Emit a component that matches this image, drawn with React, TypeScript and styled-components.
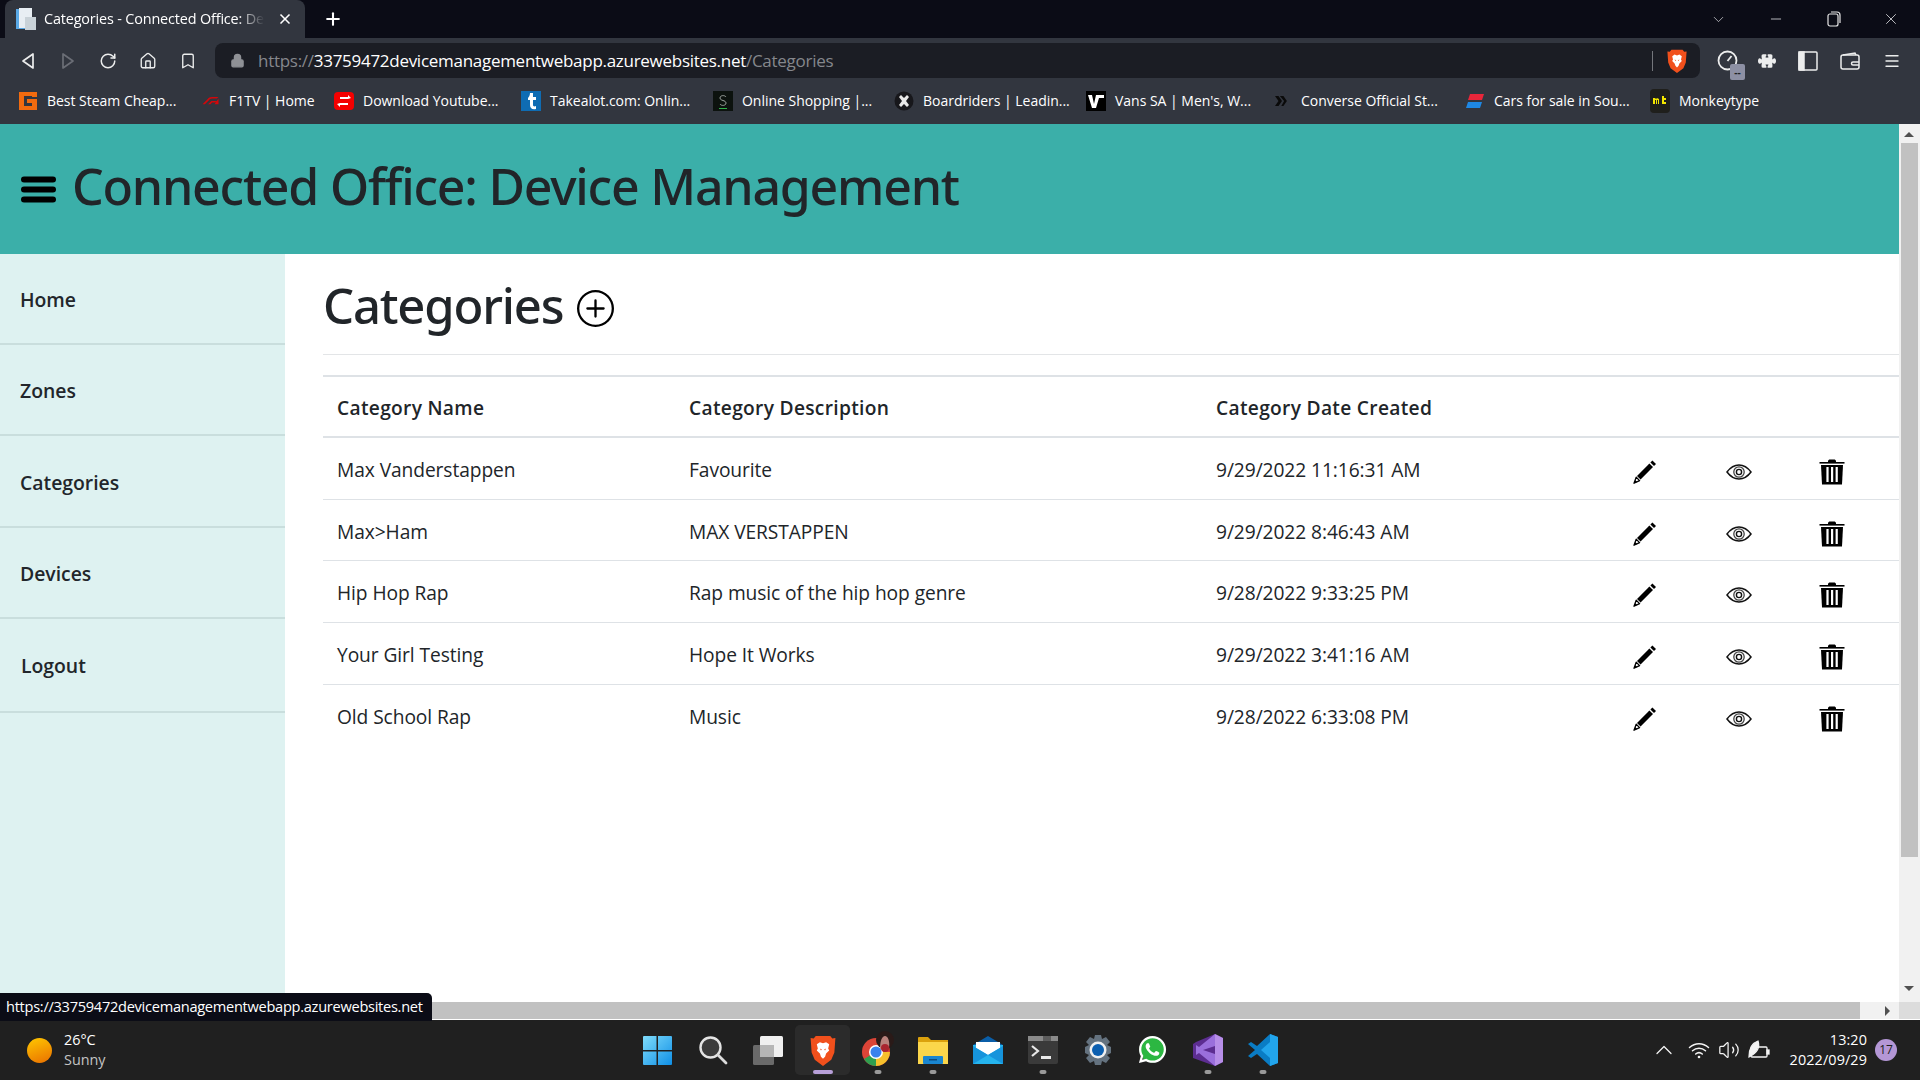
import React from "react";
import styled, { createGlobalStyle } from "styled-components";
import {
  RotateCw,
  Home as HomeIcon,
  Bookmark,
  Lock,
  Minus,
  X,
  Plus,
  ChevronDown,
  ChevronUp,
  Volume2,
  Menu,
} from "lucide-react";
import { BsPlusCircle, BsPuzzleFill } from "react-icons/bs";
import { FaWhatsapp } from "react-icons/fa";

const GlobalStyle = createGlobalStyle`
  html, body {
    margin: 0;
    padding: 0;
    width: 1920px;
    height: 1080px;
    overflow: hidden;
    background: #fff;
    font-family: "Open Sans", "Noto Sans", sans-serif;
    color: #212529;
  }
  * { box-sizing: border-box; }
`;

const Screen = styled.div`
  position: relative;
  width: 1920px;
  height: 1080px;
  display: flex;
  flex-direction: column;
  overflow: hidden;
`;

/* browser chrome */
const TabStrip = styled.div`
  height: 38px;
  background: #0b0c16;
  display: flex;
  align-items: flex-end;
  padding-left: 5px;
  color: #fff;
`;

const Tab = styled.div`
  width: 300px;
  height: 38px;
  background: #32363f;
  border-radius: 8px 8px 0 0;
  display: flex;
  align-items: center;
  padding-left: 11px;
  gap: 8px;
`;

const TabTitle = styled.div`
  width: 225px;
  padding-right: 4px;
  font-size: 14.4px;
  letter-spacing: -0.15px;
  line-height: 20px;
  margin-top: -1px;
  white-space: nowrap;
  overflow: hidden;
  mask-image: linear-gradient(to right, #000 86%, transparent 98%);
`;

const NewTab = styled.div`
  width: 56px;
  display: flex;
  justify-content: center;
  align-self: center;
`;

const WindowControls = styled.div`
  margin-left: auto;
  display: flex;
  align-self: center;
`;

const WindowButton = styled.div`
  width: 57.5px;
  display: flex;
  justify-content: center;
  align-items: center;
  color: #dfe0e3;
`;

const Toolbar = styled.div`
  height: 40px;
  background: #32363f;
  display: flex;
  align-items: flex-end;
  padding-left: 8px;
  color: #e8e9eb;
`;

const NavButton = styled.div<{ $dim?: boolean }>`
  width: 40px;
  height: 35px;
  display: flex;
  align-items: center;
  justify-content: center;
  color: ${(p) => (p.$dim ? "#6b6e76" : "#eceded")};
`;

const UrlBar = styled.div`
  width: 1485px;
  height: 35px;
  margin-left: 7px;
  background: #1b1d24;
  border-radius: 8px;
  display: flex;
  align-items: center;
  padding-left: 15px;
`;

const UrlText = styled.div`
  margin-left: 13px;
  width: 1394px;
  font-size: 17px;
  letter-spacing: -0.28px;
  white-space: nowrap;
  color: #85878c;
  span { color: #fff; }
`;

const UrlDivider = styled.div`
  width: 1px;
  height: 20px;
  background: #74767c;
`;

const BraveSlot = styled.div`
  margin-left: 14px;
  display: flex;
`;

const ToolIcons = styled.div`
  display: flex;
  height: 35px;
  align-items: center;
  margin-left: 7px;
`;

const ToolIcon = styled.div<{ $width: number }>`
  position: relative;
  width: ${(p) => p.$width}px;
  display: flex;
  justify-content: center;
  align-items: center;
  color: #eceded;
`;

const CountBadge = styled.div`
  position: absolute;
  right: 2px;
  bottom: -9px;
  width: 15px;
  height: 16px;
  border-radius: 2px;
  background: #8d90a4;
  color: #202227;
  font-size: 10px;
  font-weight: 700;
  line-height: 16px;
  text-align: center;
`;

const BookmarksBar = styled.div`
  height: 46px;
  background: #32363f;
  display: flex;
  align-items: center;
  padding-left: 18px;
  color: #fff;
`;

const BookmarkItem = styled.div<{ $width: number }>`
  width: ${(p) => p.$width}px;
  display: flex;
  align-items: center;
  gap: 9px;
  font-size: 14px;
  line-height: 20px;
  letter-spacing: -0.02px;
  white-space: nowrap;
  margin-top: -1px;
`;

const FavSlot = styled.div`
  width: 20px;
  height: 20px;
  display: flex;
  align-items: center;
  justify-content: center;
  flex: none;
`;

/* page */
const Viewport = styled.div`
  height: 878px;
  display: flex;
`;

const Page = styled.div`
  width: 1899px;
  display: flex;
  flex-direction: column;
`;

const Banner = styled.header`
  height: 130px;
  background: #3bafa9;
  display: flex;
  align-items: center;
  padding-left: 21px;
  gap: 16px;
`;

const BannerTitle = styled.h1`
  margin: 0 0 7px;
  font-family: "Noto Sans", "Open Sans", sans-serif;
  font-size: 50px;
  font-weight: 500;
  letter-spacing: -1.22px;
  line-height: 60px;
  color: #212529;
`;

const Columns = styled.div`
  flex: 1;
  display: flex;
`;

const Sidebar = styled.nav`
  flex: none;
  width: 285px;
  background: #def2f1;
  display: flex;
  flex-direction: column;
`;

const SideLink = styled.a<{ $height: number; $inset?: number }>`
  height: ${(p) => p.$height}px;
  display: flex;
  align-items: center;
  padding-left: ${(p) => p.$inset ?? 20}px;
  padding-top: ${(p) => (p.$inset ? 0 : 2)}px;
  border-bottom: 2px solid #c9dedd;
  font-size: 19.4px;
  font-weight: 600;
  letter-spacing: -0.02px;
  color: #22262b;
`;

const Content = styled.main`
  flex: 1;
  min-width: 0;
  padding-left: 38px;
`;

const HeadingRow = styled.div`
  height: 101px;
  border-bottom: 1px solid #e3e5e7;
  display: flex;
  align-items: center;
  gap: 14px;
  margin-bottom: 20px;
  padding-top: 2px;
`;

const Heading = styled.h1`
  margin: 0;
  font-family: "Noto Sans", "Open Sans", sans-serif;
  font-size: 49px;
  font-weight: 500;
  letter-spacing: -1.2px;
  line-height: 60px;
  color: #212529;
`;

const AddLink = styled.a`
  display: flex;
  color: #000;
  margin-top: 6px;
`;

const Table = styled.table`
  width: 100%;
  table-layout: fixed;
  border-collapse: separate;
  border-spacing: 0;
  font-size: 19.2px;
  letter-spacing: -0.08px;
  color: #212529;
`;

const Column = styled.col<{ $width: number }>`
  width: ${(p) => p.$width}px;
`;

const HeadCell = styled.th`
  height: 63px;
  padding: 1px 14px 0;
  text-align: left;
  font-weight: 600;
  letter-spacing: 0.3px;
  border-top: 2px solid #dee2e6;
  border-bottom: 2px solid #dee2e6;
`;

const Cell = styled.td<{ $last?: boolean }>`
  height: 61.7px;
  padding: 2px 14px 0;
  border-bottom: ${(p) => (p.$last ? "none" : "1.5px solid #dee2e6")};
`;

const ActionCell = styled(Cell)<{ $end?: boolean }>`
  padding: 7px ${(p) => (p.$end ? "21px" : "0")} 0 0;
  text-align: center;
  line-height: 0;
`;

const VScroll = styled.div`
  position: relative;
  width: 21px;
  background: #f1f1f1;
`;

const VThumb = styled.div`
  position: absolute;
  top: 19px;
  left: 2px;
  width: 17px;
  height: 714px;
  background: #c1c1c1;
`;

const ArrowUp = styled.div<{ $down?: boolean }>`
  position: absolute;
  left: 5px;
  ${(p) => (p.$down ? "bottom: 11px;" : "top: 8px;")}
  width: 0;
  height: 0;
  border-left: 5px solid transparent;
  border-right: 5px solid transparent;
  ${(p) => (p.$down ? "border-top: 5px solid #505050;" : "border-bottom: 5px solid #505050;")}
`;

const HScroll = styled.div`
  height: 18px;
  display: flex;
  background: #f1f1f1;
  border-bottom: 1px solid #fff;
`;

const HThumb = styled.div`
  width: 1860px;
  background: #c1c1c1;
`;

const HArrowSlot = styled.div`
  width: 39px;
  display: flex;
  align-items: center;
  justify-content: flex-end;
  padding-right: 9px;
`;

const HArrow = styled.div`
  width: 0;
  height: 0;
  border-top: 5px solid transparent;
  border-bottom: 5px solid transparent;
  border-left: 5px solid #505050;
`;

const Corner = styled.div`
  width: 21px;
  background: #dcdcdc;
`;

const StatusBubble = styled.div`
  position: absolute;
  left: 0;
  top: 993px;
  width: 432px;
  height: 28px;
  background: #0b0c16;
  border-radius: 0 5px 0 0;
  color: #fff;
  font-size: 14.6px;
  letter-spacing: -0.28px;
  line-height: 27px;
  padding-left: 6px;
  white-space: nowrap;
`;

/* taskbar */
const Taskbar = styled.footer`
  height: 60px;
  background: #202020;
  display: grid;
  grid-template-columns: 1fr auto 1fr;
  align-items: center;
  color: #fff;
`;

const Weather = styled.div`
  display: flex;
  align-items: center;
  padding-left: 27px;
  gap: 12px;
`;

const Sun = styled.div`
  width: 25px;
  height: 25px;
  border-radius: 50%;
  background: linear-gradient(160deg, #ffc800, #e96f00);
`;

const WeatherText = styled.div`
  font-size: 14.4px;
  line-height: 20px;
  span { display: block; color: #c4c4c4; }
`;

const TaskIcons = styled.div`
  display: flex;
`;

const TaskIcon = styled.div<{ $active?: boolean }>`
  position: relative;
  width: 55px;
  height: 50px;
  display: flex;
  align-items: center;
  justify-content: center;
  border-radius: 5px;
  background: ${(p) => (p.$active ? "#2b2b2b" : "transparent")};
`;

const RunningDot = styled.div<{ $active?: boolean }>`
  position: absolute;
  bottom: 1px;
  left: 50%;
  transform: translateX(-50%);
  height: 4px;
  border-radius: 2px;
  width: ${(p) => (p.$active ? 20 : 7)}px;
  background: ${(p) => (p.$active ? "#b79fd8" : "#9a9a9a")};
`;

const Tray = styled.div`
  display: flex;
  justify-content: flex-end;
  align-items: center;
  padding-right: 23px;
`;

const TrayIcon = styled.div<{ $width?: number }>`
  width: ${(p) => p.$width ?? 30}px;
  display: flex;
  justify-content: center;
  color: #f3f3f3;
`;

const Clock = styled.div`
  margin-left: 16px;
  text-align: right;
  font-size: 14.4px;
  line-height: 20px;
  letter-spacing: 0.1px;
`;

const NotifyBadge = styled.div`
  margin-left: 8px;
  width: 22px;
  height: 22px;
  border-radius: 50%;
  background: #b497d6;
  color: #202020;
  font-size: 12px;
  line-height: 22px;
  text-align: center;
`;

/* drawings */
const BraveLion = ({ width, height }: { width: number; height: number }) => (
  <svg width={width} height={height} viewBox="0 0 24 30">
    <path d="M5 1h14l2 2.500L24 3l-1 14-3 7-8 6-8-6-3-7L0 3l3 .5z" fill="#f1501c" />
    <path d="M6 9l3-2 3 1 3-1 3 2-1 4 1 2-3 3-1 3-2 2-2-2-1-3-3-3 1-2z" fill="#fff" />
    <path d="M9 13l2 1-1 1zM15 13l-2 1 1 1z" fill="#f1501c" />
  </svg>
);

const PencilIcon = () => (
  <svg width="24" height="24" viewBox="0 0 24 24">
    <path d="M19.400 0.600l3.600 3.400-2 2.100-3.600-3.500z" fill="#000" />
    <path d="M16.400 3.600l3.600 3.500L7.600 19.600 4 16z" fill="#000" />
    <path d="M3.200 17.200l3.400 3.400-5.600 2.600z" fill="none" stroke="#000" strokeWidth="1.300" strokeLinejoin="round" />
    <path d="M1 23.200l1.200-3.200 2 2z" fill="#000" />
  </svg>
);

const EyeIcon = () => (
  <svg width="26" height="16" viewBox="0 0 26 16" fill="none" stroke="#111">
    <path d="M1 8c3-4 7-7 12-7s9 3 12 7c-3 4-7 7-12 7S4 12 1 8z" strokeWidth="1.500" />
    <circle cx="13" cy="8" r="5.200" strokeWidth="1.300" stroke="#444" />
    <circle cx="13" cy="8" r="2.600" strokeWidth="1.400" />
  </svg>
);

const TrashIcon = () => (
  <svg width="26" height="26" viewBox="0 0 26 26">
    <path d="M9 2.200C9 .9 10 .4 11 .4h4c1 0 2 .5 2 1.800V3H9z" fill="#000" />
    <rect x="0.500" y="3" width="25" height="1.600" fill="#000" />
    <path d="M2 6h22l-1 19.400H3z" fill="#000" />
    <rect x="7.400" y="8" width="2.200" height="15" fill="#fff" />
    <rect x="12" y="8" width="2.200" height="15" fill="#fff" />
    <rect x="16.600" y="8" width="2.200" height="15" fill="#fff" />
  </svg>
);

const Hamburger = () => (
  <svg width="35" height="27" viewBox="0 0 35 27">
    <rect y="0.500" width="35" height="6" rx="3" fill="#000" />
    <rect y="10.500" width="35" height="6" rx="3" fill="#000" />
    <rect y="20.500" width="35" height="6" rx="3" fill="#000" />
  </svg>
);

const TabFavicon = () => (
  <svg width="20" height="22" viewBox="0 0 20 22">
    <rect x="0" y="1" width="13" height="20" fill="#5aa9e6" />
    <rect x="3" y="0" width="13" height="20" fill="#e8eef3" />
    <rect x="9" y="9" width="11" height="13" fill="#c9d2d8" />
  </svg>
);

const WifiIcon = () => (
  <svg width="22" height="18" viewBox="0 0 22 18" fill="none" stroke="#f3f3f3" strokeWidth="1.500" strokeLinecap="round">
    <path d="M1.500 6.500c5.500-5 13.500-5 19 0" />
    <path d="M4.500 9.800c3.800-3.400 9.200-3.400 13 0" />
    <path d="M7.700 13c1.900-1.600 4.700-1.600 6.600 0" />
    <circle cx="11" cy="16" r="1.300" fill="#f3f3f3" stroke="none" />
  </svg>
);

const bookmarkIcons: Record<string, React.ReactNode> = {
  g: (
    <svg width="20" height="20" viewBox="0 0 20 20">
      <path d="M1 1h18v5h-5V5H6v10h8v-3H9V8h10v11H1z" fill="#f26b0f" />
    </svg>
  ),
  f1: (
    <svg width="19" height="8" viewBox="0 0 20 10">
      <path d="M0 9l6-6c2-2 3-3 6-3h8l-2 2h-6c-2 0-3 1-4 2l-5 5zM7 9l4-4h7l-2 2h-4l-2 2zM15 9l5-7v7z" fill="#d4070a" />
    </svg>
  ),
  yt: (
    <svg width="20" height="18" viewBox="0 0 20 18">
      <rect width="20" height="18" rx="4" fill="#f40000" />
      <path d="M6 5h8V3l3 3-3 1H6zM14 13H6v2l-3-3 3-1h8z" fill="#fff" />
    </svg>
  ),
  t: (
    <svg width="20" height="20" viewBox="0 0 20 20">
      <rect width="20" height="20" fill="#0f6cb3" />
      <path d="M9 2h3v4h3v3h-3v5c0 1 1 2 3 1v3c-4 1-6-1-6-4V9H7V7c1-1 2-3 2-5z" fill="#fff" />
    </svg>
  ),
  s: (
    <svg width="20" height="20" viewBox="0 0 20 20">
      <rect width="20" height="20" fill="#0c120e" />
      <path d="M13 6c-1-2-6-2-6 1s6 2 6 5-5 3-6 1" fill="none" stroke="#9ca29e" strokeWidth="1" />
      <rect x="6" y="17" width="8" height="1" fill="#2fb24a" />
    </svg>
  ),
  br: (
    <svg width="20" height="20" viewBox="0 0 20 20">
      <circle cx="10" cy="10" r="9.500" fill="#17171b" />
      <path d="M7 4l3 3 3-3 2 2-3 4 3 4-2 2-3-3-3 3-2-2 3-4-3-4z" fill="#e8e8e8" />
    </svg>
  ),
  v: (
    <svg width="20" height="20" viewBox="0 0 20 20">
      <rect width="20" height="20" fill="#000" />
      <path d="M2 4h4l2 9 2-9h8v3h-5l-3 10H6z" fill="#fff" />
    </svg>
  ),
  c: (
    <svg width="14" height="12" viewBox="0 0 20 14">
      <path d="M0 0h5l5 7-5 7H0l5-7zM7 0h5l5 7-5 7H9l4-7z" fill="#0a0a0a" />
    </svg>
  ),
  cars: (
    <svg width="18" height="14" viewBox="0 0 18 14">
      <path d="M4 0h14l-2 6H2z" fill="#e8263a" />
      <path d="M2 8h14l-2 6H0z" fill="#1e88e5" />
    </svg>
  ),
  mt: (
    <svg width="20" height="24" viewBox="0 0 20 24">
      <rect width="20" height="24" rx="4" fill="#1f1f1c" />
      <path d="M3 15V9h2l1 1 1-1 2 1v5H8v-4H7v4H6v-4H5v4zM12 7h2v2h2v2h-2v2h2v2h-4z" fill="#f3e600" />
    </svg>
  ),
};

const bookmarks = [
  { icon: "g", label: "Best Steam Cheap...", width: 182 },
  { icon: "f1", label: "F1TV | Home", width: 134 },
  { icon: "yt", label: "Download Youtube...", width: 187 },
  { icon: "t", label: "Takealot.com: Onlin...", width: 192 },
  { icon: "s", label: "Online Shopping |...", width: 181 },
  { icon: "br", label: "Boardriders | Leadin...", width: 192 },
  { icon: "v", label: "Vans SA | Men's, W...", width: 186 },
  { icon: "c", label: "Converse Official St...", width: 193 },
  { icon: "cars", label: "Cars for sale in Sou...", width: 185 },
  { icon: "mt", label: "Monkeytype", width: 110 },
];

const sideLinks = [
  { label: "Home", height: 91 },
  { label: "Zones", height: 91 },
  { label: "Categories", height: 92 },
  { label: "Devices", height: 91 },
  { label: "Logout", height: 94, inset: 21 },
];

const categories = [
  { name: "Max Vanderstappen", description: "Favourite", created: "9/29/2022 11:16:31 AM" },
  { name: "Max>Ham", description: "MAX VERSTAPPEN", created: "9/29/2022 8:46:43 AM" },
  { name: "Hip Hop Rap", description: "Rap music of the hip hop genre", created: "9/28/2022 9:33:25 PM" },
  { name: "Your Girl Testing", description: "Hope It Works", created: "9/29/2022 3:41:16 AM" },
  { name: "Old School Rap", description: "Music", created: "9/28/2022 6:33:08 PM" },
];

const taskIcons: { key: string; dot?: boolean; active?: boolean; node: React.ReactNode }[] = [
  {
    key: "start",
    node: (
      <svg width="29" height="29" viewBox="0 0 29 29">
        <defs>
          <linearGradient id="win" x1="0" y1="0" x2="1" y2="1">
            <stop offset="0" stopColor="#7fdcfb" />
            <stop offset="1" stopColor="#0f8fe6" />
          </linearGradient>
        </defs>
        <path d="M0 1a1 1 0 0 1 1-1h12.500v14H0zM15 0h13a1 1 0 0 1 1 1v13H15zM0 15.500h13.500V29H1a1 1 0 0 1-1-1zM15 15.500h14V28a1 1 0 0 1-1 1H15z" fill="url(#win)" />
      </svg>
    ),
  },
  {
    key: "search",
    node: (
      <svg width="30" height="30" viewBox="0 0 30 30" fill="none">
        <circle cx="12.500" cy="12.500" r="10" fill="#3c3c3c" stroke="#e4e4e4" strokeWidth="2.400" />
        <path d="M20 20l8 8" stroke="#dcdcdc" strokeWidth="2.800" strokeLinecap="round" />
      </svg>
    ),
  },
  {
    key: "tasks",
    node: (
      <svg width="30" height="29" viewBox="0 0 30 29">
        <rect x="0" y="9" width="21" height="20" rx="1.500" fill="#6a6a6a" />
        <rect x="7" y="0" width="23" height="21" rx="1.500" fill="#f0f0f0" />
        <rect x="7" y="9" width="14" height="12" fill="#b6b6b6" />
      </svg>
    ),
  },
  { key: "brave", active: true, dot: true, node: <BraveLion width={26} height={31} /> },
  {
    key: "chrome",
    dot: true,
    node: (
      <svg width="34" height="38" viewBox="0 0 34 38">
        <circle cx="15" cy="21" r="14" fill="#dc4437" />
        <path d="M15 21L3 28a14 14 0 0 0 12 7z" fill="#2f9e4f" />
        <path d="M15 21v14a14 14 0 0 0 12-7 14 14 0 0 0 2-7z" fill="#f6c02c" />
        <circle cx="15" cy="21" r="7" fill="#fff" />
        <circle cx="15" cy="21" r="5.500" fill="#3b82ee" />
        <circle cx="24" cy="9" r="9" fill="#2a1a18" />
        <path d="M19 18c0-8 2-13 5-13s5 5 4 12l-4 3z" fill="#b9827c" />
        <circle cx="24" cy="17" r="4" fill="#a9252f" />
      </svg>
    ),
  },
  {
    key: "files",
    dot: true,
    node: (
      <svg width="30" height="28" viewBox="0 0 30 28">
        <path d="M0 2a1 1 0 0 1 1-1h9l3 3h17v5H0z" fill="#dba10d" />
        <path d="M0 6h30v22H0z" fill="#fbd64b" />
        <rect x="5" y="20" width="20" height="8" rx="1" fill="#1a86d0" />
        <rect x="11" y="23" width="8" height="1.500" fill="#0c4d80" />
      </svg>
    ),
  },
  {
    key: "mail",
    node: (
      <svg width="30" height="28" viewBox="0 0 30 28">
        <path d="M15 0l15 9v2H0V9z" fill="#0a5ea8" />
        <path d="M0 9h30v19H0z" fill="#25b4ee" />
        <path d="M3 6h24v6l-12 7-12-7z" fill="#fff" />
        <path d="M0 28V10l15 9-15 9zM30 28V10l-15 9 15 9z" fill="#1694dc" />
      </svg>
    ),
  },
  {
    key: "terminal",
    dot: true,
    node: (
      <svg width="30" height="28" viewBox="0 0 30 28">
        <rect width="30" height="28" rx="2" fill="#3a3a3a" />
        <rect width="30" height="5" fill="#8a8a8a" />
        <rect x="15" width="8" height="5" fill="#5d5d5d" />
        <path d="M4 10l6 5-6 5" fill="none" stroke="#e9e9e9" strokeWidth="2.200" />
        <rect x="13" y="20" width="10" height="3" fill="#e9e9e9" />
      </svg>
    ),
  },
  {
    key: "settings",
    node: (
      <svg width="30" height="30" viewBox="0 0 30 30">
        <path d="M12 0h6l1 4 4-2 4 5-3 3 4 2v6l-4 2 3 3-4 5-4-2-1 4h-6l-1-4-4 2-4-5 3-3-4-2v-6l4-2-3-3 4-5 4 2z" fill="#64727f" />
        <circle cx="15" cy="15" r="8.500" fill="#f0f0f0" />
        <circle cx="15" cy="15" r="6" fill="#0c5fb0" />
      </svg>
    ),
  },
  {
    key: "whatsapp",
    node: (
      <svg width="31" height="32" viewBox="0 0 31 32">
        <circle cx="15.500" cy="15.500" r="13" fill="#2cb742" />
        <foreignObject width="31" height="32">
          <FaWhatsapp size={31} color="#fff" />
        </foreignObject>
      </svg>
    ),
  },
  {
    key: "vs",
    dot: true,
    node: (
      <svg width="30" height="32" viewBox="0 0 30 32">
        <path d="M22 0l8 4v24l-8 4L0 24V10l3-2z" fill="#5c2d91" />
        <path d="M22 0l8 4v24l-8 4z" fill="#b78ee8" />
        <path d="M22 0v12L10 16l12 4v12L6 19l-3 2V11l3 2z" fill="#9a6fdc" />
      </svg>
    ),
  },
  {
    key: "vscode",
    dot: true,
    node: (
      <svg width="30" height="32" viewBox="0 0 30 32">
        <path d="M22 0l8 3v26l-8 3L9 20l-6 4-3-2 7-6-7-6 3-2 6 4z" fill="#0a7cc4" />
        <path d="M22 0l8 3v26l-8 3zM22 8l-9 8 9 8z" fill="#22a5ec" />
      </svg>
    ),
  },
];

const App = () => (
  <Screen>
    <GlobalStyle />
    <TabStrip>
      <Tab>
        <TabFavicon />
        <TabTitle>Categories - Connected Office: Device Management</TabTitle>
        <X size={16} strokeWidth={2.5} />
      </Tab>
      <NewTab>
        <Plus size={20} strokeWidth={2.5} />
      </NewTab>
      <WindowControls>
        <WindowButton>
          <ChevronDown size={17} strokeWidth={1} />
        </WindowButton>
        <WindowButton>
          <Minus size={16} strokeWidth={1.2} />
        </WindowButton>
        <WindowButton>
          <svg width="14" height="16" viewBox="0 0 14 16" fill="none" stroke="#e6e6e6" strokeWidth="1.200">
            <rect x="1" y="3" width="10" height="12" rx="2" />
            <path d="M4 1h6a3 3 0 0 1 3 3v8" />
          </svg>
        </WindowButton>
        <WindowButton>
          <X size={18} strokeWidth={1.1} />
        </WindowButton>
      </WindowControls>
    </TabStrip>

    <Toolbar>
      <NavButton>
        <svg width="14" height="18" viewBox="0 0 14 18" fill="none" stroke="currentColor" strokeWidth="1.700" strokeLinejoin="round">
          <path d="M12 2v14L2 9z" />
        </svg>
      </NavButton>
      <NavButton $dim>
        <svg width="14" height="18" viewBox="0 0 14 18" fill="none" stroke="currentColor" strokeWidth="1.700" strokeLinejoin="round">
          <path d="M2 2v14l10-7z" />
        </svg>
      </NavButton>
      <NavButton>
        <RotateCw size={18} strokeWidth={2} />
      </NavButton>
      <NavButton>
        <HomeIcon size={18} strokeWidth={1.8} />
      </NavButton>
      <NavButton>
        <Bookmark size={18} strokeWidth={1.8} />
      </NavButton>
      <UrlBar>
        <Lock size={15} color="#8f9196" fill="#8f9196" />
        <UrlText>
          https://<span>33759472devicemanagementwebapp.azurewebsites.net</span>/Categories
        </UrlText>
        <UrlDivider />
        <BraveSlot>
          <BraveLion width={20} height={24} />
        </BraveSlot>
      </UrlBar>
      <ToolIcons>
        <ToolIcon $width={40}>
          <svg width="21" height="21" viewBox="0 0 21 21" fill="none" stroke="#eceded" strokeWidth="1.800">
            <circle cx="10.500" cy="10.500" r="9" />
            <path d="M10.500 11l4-5" />
          </svg>
          <CountBadge>--</CountBadge>
        </ToolIcon>
        <ToolIcon $width={40}>
          <BsPuzzleFill size={18} />
        </ToolIcon>
        <ToolIcon $width={41}>
          <svg width="20" height="20" viewBox="0 0 20 20" fill="none" stroke="#eceded" strokeWidth="1.500">
            <rect x="1" y="1" width="18" height="18" rx="1" />
            <rect x="1" y="1" width="5" height="18" fill="#eceded" />
          </svg>
        </ToolIcon>
        <ToolIcon $width={43}>
          <svg width="20" height="18" viewBox="0 0 20 18" fill="none" stroke="#eceded" strokeWidth="1.500">
            <rect x="1" y="3" width="18" height="14" rx="2" />
            <path d="M3 3l12-2 1 2M13 10h6M13 10a1.500 1.500 0 0 0 0 3h6" />
          </svg>
        </ToolIcon>
        <ToolIcon $width={42}>
          <Menu size={18} strokeWidth={1.8} />
        </ToolIcon>
      </ToolIcons>
    </Toolbar>

    <BookmarksBar>
      {bookmarks.map((b) => (
        <BookmarkItem key={b.label} $width={b.width}>
          <FavSlot>{bookmarkIcons[b.icon]}</FavSlot>
          {b.label}
        </BookmarkItem>
      ))}
    </BookmarksBar>

    <Viewport>
      <Page>
        <Banner>
          <Hamburger />
          <BannerTitle>Connected Office: Device Management</BannerTitle>
        </Banner>
        <Columns>
          <Sidebar>
            {sideLinks.map((l) => (
              <SideLink key={l.label} $height={l.height} $inset={l.inset}>
                {l.label}
              </SideLink>
            ))}
          </Sidebar>
          <Content>
            <HeadingRow>
              <Heading>Categories</Heading>
              <AddLink>
                <BsPlusCircle size={37} />
              </AddLink>
            </HeadingRow>
            <Table>
              <colgroup>
                <Column $width={352} />
                <Column $width={527} />
                <Column $width={396} />
                <Column $width={94} />
                <Column $width={94} />
                <Column $width={113} />
              </colgroup>
              <thead>
                <tr>
                  <HeadCell>Category Name</HeadCell>
                  <HeadCell>Category Description</HeadCell>
                  <HeadCell>Category Date Created</HeadCell>
                  <HeadCell />
                  <HeadCell />
                  <HeadCell />
                </tr>
              </thead>
              <tbody>
                {categories.map((c, i) => {
                  const last = i === categories.length - 1;
                  return (
                    <tr key={c.name}>
                      <Cell $last={last}>{c.name}</Cell>
                      <Cell $last={last}>{c.description}</Cell>
                      <Cell $last={last}>{c.created}</Cell>
                      <ActionCell $last={last}>
                        <PencilIcon />
                      </ActionCell>
                      <ActionCell $last={last}>
                        <EyeIcon />
                      </ActionCell>
                      <ActionCell $last={last} $end>
                        <TrashIcon />
                      </ActionCell>
                    </tr>
                  );
                })}
              </tbody>
            </Table>
          </Content>
        </Columns>
      </Page>
      <VScroll>
        <ArrowUp />
        <VThumb />
        <ArrowUp $down />
      </VScroll>
    </Viewport>

    <HScroll>
      <HThumb />
      <HArrowSlot>
        <HArrow />
      </HArrowSlot>
      <Corner />
    </HScroll>

    <StatusBubble>https://33759472devicemanagementwebapp.azurewebsites.net</StatusBubble>

    <Taskbar>
      <Weather>
        <Sun />
        <WeatherText>
          26°C
          <span>Sunny</span>
        </WeatherText>
      </Weather>
      <TaskIcons>
        {taskIcons.map((t) => (
          <TaskIcon key={t.key} $active={t.active}>
            {t.node}
            {t.dot && <RunningDot $active={t.active} />}
          </TaskIcon>
        ))}
      </TaskIcons>
      <Tray>
        <TrayIcon $width={40}>
          <ChevronUp size={28} strokeWidth={1.1} />
        </TrayIcon>
        <TrayIcon>
          <WifiIcon />
        </TrayIcon>
        <TrayIcon>
          <Volume2 size={22} strokeWidth={1.4} />
        </TrayIcon>
        <TrayIcon>
          <svg width="22" height="20" viewBox="0 0 22 20" fill="none" stroke="#f3f3f3" strokeWidth="1.300">
            <rect x="3" y="7" width="16" height="10" rx="1" />
            <rect x="19" y="10" width="2" height="4" fill="#f3f3f3" />
            <path d="M1 17C1 9 4 3 10 1c2 6-1 12-9 16z" fill="#f3f3f3" />
          </svg>
        </TrayIcon>
        <Clock>
          13:20
          <br />
          2022/09/29
        </Clock>
        <NotifyBadge>17</NotifyBadge>
      </Tray>
    </Taskbar>
  </Screen>
);

export default App;
